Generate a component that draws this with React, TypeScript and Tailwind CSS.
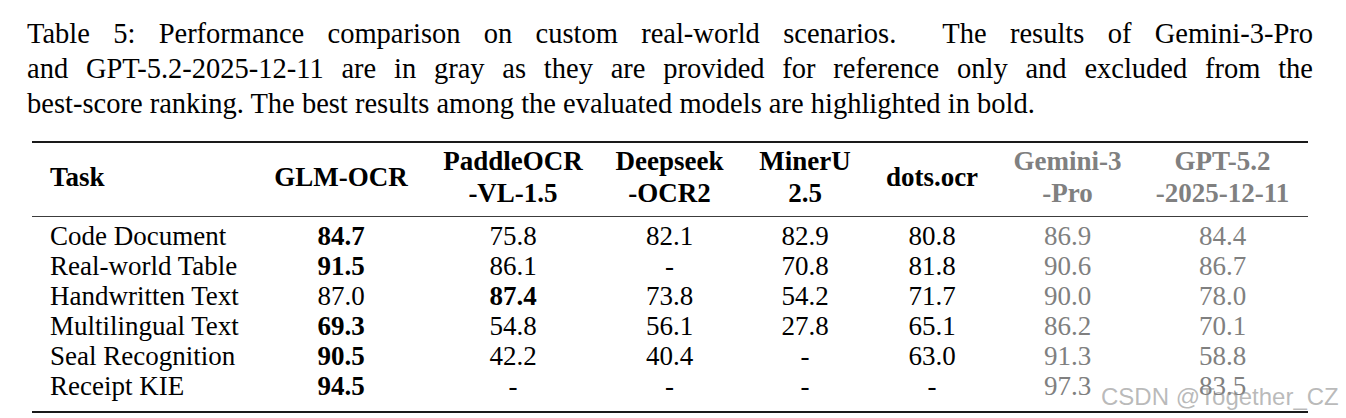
import React from 'react';

interface Row {
  task: string;
  values: string[];
  best: number;
}

const rows: Row[] = [
  { task: 'Code Document', values: ['84.7', '75.8', '82.1', '82.9', '80.8', '86.9', '84.4'], best: 0 },
  { task: 'Real-world Table', values: ['91.5', '86.1', '-', '70.8', '81.8', '90.6', '86.7'], best: 0 },
  { task: 'Handwritten Text', values: ['87.0', '87.4', '73.8', '54.2', '71.7', '90.0', '78.0'], best: 1 },
  { task: 'Multilingual Text', values: ['69.3', '54.8', '56.1', '27.8', '65.1', '86.2', '70.1'], best: 0 },
  { task: 'Seal Recognition', values: ['90.5', '42.2', '40.4', '-', '63.0', '91.3', '58.8'], best: 0 },
  { task: 'Receipt KIE', values: ['94.5', '-', '-', '-', '-', '97.3', '83.5'], best: 0 },
];

const headers: { lines: string[]; gray?: boolean }[] = [
  { lines: ['GLM-OCR'] },
  { lines: ['PaddleOCR', '-VL-1.5'] },
  { lines: ['Deepseek', '-OCR2'] },
  { lines: ['MinerU', '2.5'] },
  { lines: ['dots.ocr'] },
  { lines: ['Gemini-3', '-Pro'], gray: true },
  { lines: ['GPT-5.2', '-2025-12-11'], gray: true },
];

const grid = 'grid grid-cols-[234px_150px_194px_119px_152px_102px_169px_141px] pr-[15px]';

export default function App() {
  return (
    <div className="relative w-[1346px] h-[418px] overflow-hidden bg-white text-black font-['Liberation_Serif','Times_New_Roman',serif]">
      {/* caption */}
      <div className="ml-[27px] w-[1286px] pt-[16px] text-[28.5px] leading-[35px]">
        <div className="whitespace-nowrap text-justify [text-align-last:justify]">
          Table 5: Performance comparison on custom real-world scenarios.&nbsp; The results of Gemini-3-Pro
        </div>
        <div className="whitespace-nowrap text-justify [text-align-last:justify]">
          and GPT-5.2-2025-12-11 are in gray as they are provided for reference only and excluded from the
        </div>
        <div className="whitespace-nowrap">
          best-score ranking. The best results among the evaluated models are highlighted in bold.
        </div>
      </div>

      {/* table */}
      <div className="ml-[32px] mt-[20px] w-[1276px] text-[27px]">
        <div className="border-t-2 border-[#1a1a1a]" />
        <div className={`${grid} items-center pt-[2px] pb-[7px] font-bold leading-[32px]`}>
          <div className="pl-[18px]">Task</div>
          {headers.map((h, i) => (
            <div key={i} className={`text-center whitespace-nowrap ${h.gray ? 'text-[#808080]' : ''}`}>
              {h.lines.map((l, j) => (
                <div key={j}>{l}</div>
              ))}
            </div>
          ))}
        </div>
        <div className="border-t-[1.5px] border-[#3c3c3c]" />
        <div className="pt-[4px] pb-[10px]">
          {rows.map((r, i) => (
            <div key={i} className={`${grid} h-[30px] leading-[30px]`}>
              <div className="pl-[18px] whitespace-nowrap">{r.task}</div>
              {r.values.map((v, j) => (
                <div
                  key={j}
                  className={`text-center ${j === r.best ? 'font-bold' : ''} ${j >= 5 ? 'text-[#808080]' : ''}`}
                >
                  {v}
                </div>
              ))}
            </div>
          ))}
        </div>
        <div className="border-t-2 border-[#1a1a1a]" />
      </div>

      {/* watermark */}
      <div className="absolute left-[1101px] top-[385px] text-[24px] leading-none whitespace-nowrap text-[rgba(140,140,140,0.6)] font-['Liberation_Sans',Arial,sans-serif]">
        CSDN @Together_CZ
      </div>
    </div>
  );
}
